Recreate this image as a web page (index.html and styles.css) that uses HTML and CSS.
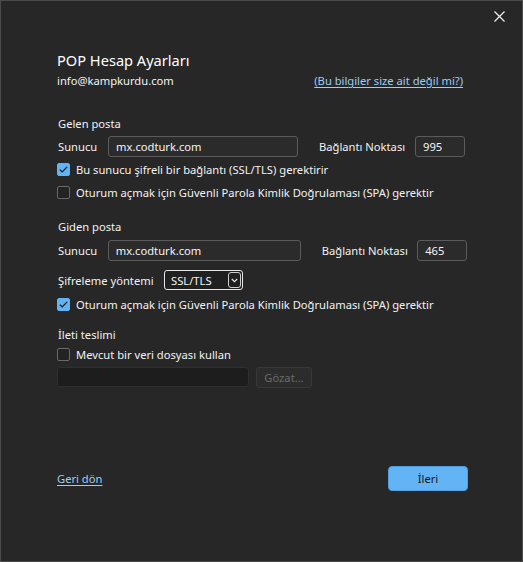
FILE: index.html
```html
<!DOCTYPE html>
<html lang="tr">
<head>
<meta charset="utf-8">
<link rel="stylesheet" href="styles.css">
</head>
<body>
<div class="window">
  <div class="titlebar">
    <button class="close" aria-label="Kapat">
      <svg width="11" height="11" viewBox="0 0 11 11"><path d="M0.5 0.5 L10.5 10.5 M10.5 0.5 L0.5 10.5" stroke="#f0f0f0" stroke-width="1.2" fill="none"/></svg>
    </button>
  </div>
  <div class="content">
    <h1 class="title">POP Hesap Ayarları</h1>
    <div class="inforow">
      <span>info@kampkurdu.com</span>
      <a class="link" href="#">(Bu bilgiler size ait değil mi?)</a>
    </div>

    <div class="section s-in">Gelen posta</div>
    <div class="fieldrow">
      <span class="lbl-server">Sunucu</span>
      <div class="input w190">mx.codturk.com</div>
      <span class="lbl-port">Bağlantı Noktası</span>
      <div class="input port">995</div>
    </div>
    <label class="check first"><span class="box on"><svg width="9" height="7" viewBox="0 0 9 7"><path d="M0.8 3.6 L3.2 5.9 L8.2 0.9" stroke="#1b1b1b" stroke-width="1.3" fill="none"/></svg></span>Bu sunucu şifreli bir bağlantı (SSL/TLS) gerektirir</label>
    <label class="check"><span class="box"></span>Oturum açmak için Güvenli Parola Kimlik Doğrulaması (SPA) gerektir</label>

    <div class="section s-out">Giden posta</div>
    <div class="fieldrow second">
      <span class="lbl-server">Sunucu</span>
      <div class="input w194">mx.codturk.com</div>
      <span class="lbl-port">Bağlantı Noktası</span>
      <div class="input port">465</div>
    </div>
    <div class="encrow">
      <span class="lbl-enc">Şifreleme yöntemi</span>
      <div class="select"><span class="seltext">SSL/TLS</span><span class="arrow"><svg width="7" height="5" viewBox="0 0 7 5"><path d="M0.8 1 L3.5 3.7 L6.2 1" stroke="#e8e8e8" stroke-width="1.1" fill="none"/></svg></span></div>
    </div>
    <label class="check first2"><span class="box on"><svg width="9" height="7" viewBox="0 0 9 7"><path d="M0.8 3.6 L3.2 5.9 L8.2 0.9" stroke="#1b1b1b" stroke-width="1.3" fill="none"/></svg></span>Oturum açmak için Güvenli Parola Kimlik Doğrulaması (SPA) gerektir</label>

    <div class="section s-del">İleti teslimi</div>
    <label class="check"><span class="box"></span>Mevcut bir veri dosyası kullan</label>
    <div class="filerow">
      <div class="fileinput"></div>
      <button class="browse" disabled>Gözat...</button>
    </div>
  </div>
  <div class="footer">
    <a class="link" href="#">Geri dön</a>
    <button class="primary">İleri</button>
  </div>
</div>
</body>
</html>
```

FILE: styles.css
```css
* { box-sizing: border-box; }
html, body { margin: 0; padding: 0; background: #272727; }
body {
  width: 523px;
  height: 562px;
  font-family: "Noto Sans", "Open Sans", sans-serif;
  font-size: 11.2px;
  color: #f2f2f2;
}
.window {
  width: 523px;
  height: 562px;
  background: #272727;
  border: 1px solid #4b4b4b;
  display: flex;
  flex-direction: column;
}
.titlebar {
  height: 30px;
  display: flex;
  justify-content: flex-end;
  align-items: flex-start;
  padding: 9px 16px 0 0;
}
.close {
  width: 13px;
  height: 13px;
  padding: 1px;
  border: 0;
  background: transparent;
  display: flex;
  align-items: center;
  justify-content: center;
}
.content {
  padding: 0 55px 0 56px;
  display: flex;
  flex-direction: column;
}
.title {
  margin: 19px 0 0;
  font-size: 14.6px;
  font-weight: 400;
  line-height: 20px;
  color: #ffffff;
}
.inforow {
  margin-top: 3px;
  height: 16px;
  line-height: 16px;
  display: flex;
  justify-content: space-between;
  padding-right: 4px;
}
.link {
  color: #9dcdf6;
  text-decoration: underline;
  text-underline-offset: 2px;
}
.section {
  height: 16px;
  line-height: 16px;
  padding-left: 1px;
}
.s-in { margin-top: 27px; }
.s-out { margin-top: 15px; }
.s-del { margin-top: 11px; }
.fieldrow {
  margin-top: 4px;
  height: 21px;
  display: flex;
  align-items: center;
}
.fieldrow.second { margin-top: 5px; }
.lbl-server { width: 51px; padding-left: 1px; }
.lbl-port { margin-left: 21px; width: 96px; }
.input {
  height: 21px;
  line-height: 19px;
  border: 1px solid #5b5b5b;
  border-radius: 3px;
  background: #2b2b2b;
  padding: 0 7px;
  color: #f4f4f4;
}
.w190 { width: 190px; }
.w194 { width: 194px; }
.port { width: 50px; }
.check {
  height: 23px;
  display: flex;
  align-items: center;
  gap: 6px;
}
.first { margin-top: 1px; }
.first2 { margin-top: 3px; }
.box {
  width: 13px;
  height: 13px;
  border: 1px solid #6a6a6a;
  border-radius: 2px;
  background: #232323;
  display: flex;
  align-items: center;
  justify-content: center;
}
.box.on {
  background: #62b3f3;
  border-color: #62b3f3;
}
.encrow {
  margin-top: 9px;
  height: 20px;
  display: flex;
  align-items: center;
}
.lbl-enc { width: 107px; padding-left: 1px; }
.select {
  width: 79px;
  height: 20px;
  border: 1px solid #e6e6e6;
  border-radius: 3px;
  display: flex;
  align-items: center;
  justify-content: space-between;
  padding: 0 1px 0 6px;
  background: #202020;
}
.seltext { color: #f4f4f4; }
.arrow {
  width: 13px;
  height: 16px;
  border: 1px solid #cfcfcf;
  border-radius: 3px;
  display: flex;
  align-items: center;
  justify-content: center;
}
.filerow {
  margin-top: 1px;
  display: flex;
  gap: 7px;
  align-items: flex-start;
}
.fileinput {
  width: 192px;
  height: 20px;
  background: #1d1d1d;
  border: 1px solid #303030;
  border-radius: 3px;
}
.browse {
  width: 56px;
  height: 21px;
  font-family: inherit;
  font-size: 11.2px;
  color: #6a6a6a;
  background: #2c2c2c;
  border: 1px solid #383838;
  border-radius: 3px;
  padding: 0;
}
.footer {
  margin-top: auto;
  padding: 0 54px 70px 56px;
  display: flex;
  justify-content: space-between;
  align-items: center;
}
.primary {
  width: 80px;
  height: 25px;
  background: #62b4f5;
  color: #161616;
  border: 1px solid #4f9fe0;
  border-radius: 4px;
  font-family: inherit;
  font-size: 11.2px;
  padding: 0;
}
```
